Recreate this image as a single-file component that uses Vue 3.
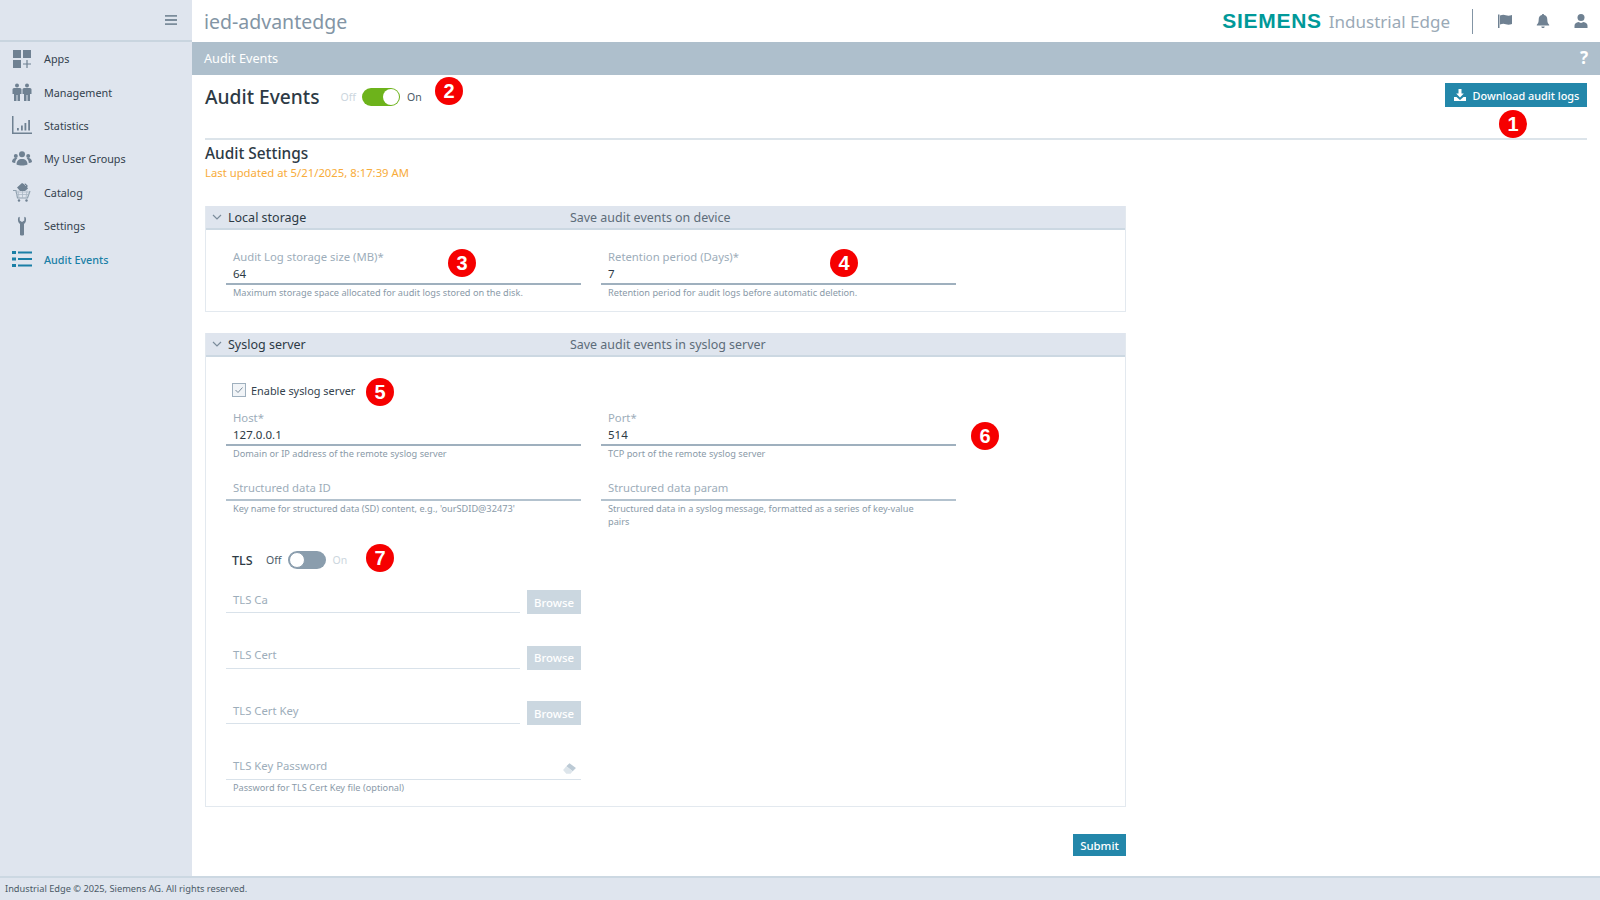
<template>
  <div class="page">
    <div class="body-row">
      <aside class="sidebar">
        <div class="side-head">
          <svg class="burger" viewBox="0 0 12 12" width="12" height="12"><path d="M0 1h12v1.800H0zM0 5.100h12v1.800H0zM0 9.200h12V11H0z" fill="#7b8c9b" /></svg>
        </div>
        <nav>
          <a v-for="item in navItems" :key="item.label" class="nav-item" :class="{ active: item.active }">
            <svg class="nav-icon" viewBox="0 0 20 20" width="20" height="20" v-html="item.icon"></svg>
            <span>{{ item.label }}</span>
          </a>
        </nav>
      </aside>

      <main class="main">
        <header class="topbar">
          <div class="app-name">ied-advantedge</div>
          <div class="brand">
            <span class="siemens">SIEMENS</span>
            <span class="edge">Industrial Edge</span>
          </div>
          <div class="top-sep"></div>
          <svg class="top-icon" viewBox="0 0 16 16" width="16" height="16"><path d="M1 1.500h1.500v13.500H1zM3 2.500c2.500-1 4-1 5.800-.3 1.700.6 3.700.6 6.200-.2v9c-2.500.8-4.500.8-6.200.2-1.800-.7-3.300-.7-5.800.3z" fill="#6f8192" /></svg>
          <svg class="top-icon" viewBox="0 0 16 16" width="16" height="16"><path d="M8 1c.7 0 1.100.5 1.100 1.100C11.200 2.600 12.300 4.300 12.300 6.500c0 2.700.6 4 1.900 5.300v.7H1.800v-.7C3.100 10.500 3.700 9.200 3.700 6.500c0-2.200 1.100-3.900 3.200-4.400C6.900 1.500 7.300 1 8 1zM6.300 13.500h3.400C9.600 14.500 8.900 15 8 15s-1.600-.5-1.700-1.500z" fill="#6f8192" /></svg>
          <svg class="top-icon last" viewBox="0 0 16 16" width="16" height="16"><circle cx="8" cy="4.600" r="3.500" fill="#6f8192" /><path d="M1.500 15v-2.200c0-2 1.800-3.300 4-3.700.8.500 1.600.8 2.500.8s1.700-.3 2.500-.8c2.200.4 4 1.700 4 3.700V15z" fill="#6f8192" /></svg>
        </header>

        <div class="crumb-bar">
          <span>Audit Events</span>
          <span class="help">?</span>
        </div>

        <div class="content">
          <div class="title-row">
            <h1>Audit Events</h1>
            <div class="switch-wrap">
              <span class="sw-label dim">Off</span>
              <span class="switch on"><i></i></span>
              <span class="sw-label">On</span>
            </div>
            <button class="btn download">
              <svg viewBox="0 0 14 14" width="14" height="14"><path d="M5.500 1h3v4.500h2.300L7 9.500 3.200 5.500h2.300zM1 9h2.500L7 12l3.500-3H13v4H1z" fill="#fff" /></svg>
              Download audit logs
            </button>
          </div>

          <div class="settings-head">
            <h2>Audit Settings</h2>
            <div class="updated">Last updated at 5/21/2025, 8:17:39 AM</div>
          </div>

          <section class="panel">
            <div class="panel-head">
              <svg class="chev" viewBox="0 0 10 6" width="10" height="6"><path d="M1 1l4 4 4-4" fill="none" stroke="#7b8c9b" stroke-width="1.200" /></svg>
              <span class="panel-title">Local storage</span>
              <span class="panel-desc">Save audit events on device</span>
            </div>
            <div class="panel-body local">
              <div class="grid">
                <div class="field" v-for="f in localFields" :key="f.label">
                  <div class="box filled">
                    <div class="label">{{ f.label }}</div>
                    <div class="value">{{ f.value }}</div>
                  </div>
                  <div class="hint">{{ f.hint }}</div>
                </div>
              </div>
            </div>
          </section>

          <section class="panel syslog">
            <div class="panel-head">
              <svg class="chev" viewBox="0 0 10 6" width="10" height="6"><path d="M1 1l4 4 4-4" fill="none" stroke="#7b8c9b" stroke-width="1.200" /></svg>
              <span class="panel-title">Syslog server</span>
              <span class="panel-desc">Save audit events in syslog server</span>
            </div>
            <div class="panel-body sys">
              <label class="check">
                <span class="check-box">
                  <svg viewBox="0 0 12 12" width="12" height="12"><path d="M2.500 6l2.500 2.500 4.500-5" fill="none" stroke="#7b8c9b" stroke-width="1" /></svg>
                </span>
                Enable syslog server
              </label>

              <div class="grid">
                <div class="field" v-for="f in hostFields" :key="f.label">
                  <div class="box filled">
                    <div class="label">{{ f.label }}</div>
                    <div class="value">{{ f.value }}</div>
                  </div>
                  <div class="hint">{{ f.hint }}</div>
                </div>
              </div>

              <div class="grid structured">
                <div class="field" v-for="f in structuredFields" :key="f.label">
                  <div class="box empty dark">
                    <div class="label">{{ f.label }}</div>
                  </div>
                  <div class="hint">{{ f.hint }}</div>
                </div>
              </div>

              <div class="tls-row">
                <span class="tls-title">TLS</span>
                <span class="sw-label">Off</span>
                <span class="switch off"><i></i></span>
                <span class="sw-label dim">On</span>
              </div>

              <div class="tls-list">
                <div class="tls-item" v-for="name in tlsFiles" :key="name">
                  <div class="box empty light">
                    <div class="label">{{ name }}</div>
                  </div>
                  <button class="browse">Browse</button>
                </div>
                <div class="field tls-pass">
                  <div class="box empty light">
                    <div class="label">TLS Key Password</div>
                    <svg class="eraser" viewBox="0 0 14 12" width="15" height="13"><path d="M7 1l6 4.500-3 3L4 4z" fill="#bccad5" /><path d="M4 4l6 4.500L8 11H4L1 7.500z" fill="#dde5eb" /></svg>
                  </div>
                  <div class="hint">Password for TLS Cert Key file (optional)</div>
                </div>
              </div>
            </div>
          </section>

          <div class="submit-row">
            <button class="btn submit">Submit</button>
          </div>
        </div>
      </main>
    </div>

    <footer class="footer">Industrial Edge © 2025, Siemens AG. All rights reserved.</footer>

    <span v-for="b in badges" :key="b.n" class="badge" :style="{ left: b.x + 'px', top: b.y + 'px' }">{{ b.n }}</span>
  </div>
</template>

<script setup>
const c = '#6f8192'

const navItems = [
  {
    label: 'Apps',
    icon: `<path d="M1 1h8v8H1zM11 1h8v8h-8zM1 11h8v8H1z" fill="${c}"/><path d="M14.400 11h1.200v3.400H19v1.200h-3.400V19h-1.200v-3.400H11v-1.200h3.400z" fill="${c}"/>`
  },
  {
    label: 'Management',
    icon: `<g fill="${c}"><circle cx="5" cy="3.500" r="2"/><circle cx="15" cy="3.500" r="2"/><path d="M.5 7.500C.5 6.500 1.500 6 2.500 6h5c1 0 2 .5 2 1.500V12H8v7H5.500v-6h-1v6H2v-7H.5zM10.500 7.500c0-1 1-1.500 2-1.500h5c1 0 2 .5 2 1.500V12H18v7h-2.500v-6h-1v6H12v-7h-1.500z"/></g>`
  },
  {
    label: 'Statistics',
    icon: `<g fill="${c}"><path d="M0 1h1.500v16.500H20V19H0z"/><path d="M5 13h1.800v2.500H5zM9 10.500h1.800v5H9zM12.500 8h1.800v7.500h-1.800zM16.200 5h1.800v10.500h-1.800z"/></g>`
  },
  {
    label: 'My User Groups',
    icon: `<g fill="${c}"><circle cx="10" cy="5.200" r="3"/><circle cx="3.800" cy="7" r="2"/><circle cx="16.200" cy="7" r="2"/><path d="M4.500 15.500c0-3.500 2-5.500 5.500-5.500s5.500 2 5.500 5.500c-3 1.300-8 1.300-11 0z"/><path d="M0 13c0-2.200 1.300-4 3.800-4 .6 0 1 .1 1.500.3-1.300 1.100-2 2.700-2.100 4.800C2 14 .9 13.700 0 13zM20 13c0-2.200-1.300-4-3.800-4-.6 0-1 .1-1.500.3 1.300 1.100 2 2.700 2.100 4.800 1.200-.1 2.300-.4 3.200-1.100z"/></g>`
  },
  {
    label: 'Catalog',
    icon: `<path d="M5 5.500L10 1l2 1 1.500-.5L16 4l-1 1 1 1.500-3 2.500H8z" fill="${c}"/><path d="M7 2.500l-2 2M11.500 1.500L14 4" stroke="#dfe5ee" stroke-width=".6" fill="none"/><path d="M1 8.500h3l1.500 7.500h10L18 9" fill="none" stroke="#8fa0ae" stroke-width="1.200"/><path d="M3.500 10h14M4.200 12.500h12.500M6 8.500L7 16M10.500 9v7M15 8.500L14 16" stroke="#a9b8c4" stroke-width=".8" fill="none"/><circle cx="7" cy="18.500" r="1.200" fill="${c}"/><circle cx="14.500" cy="18.500" r="1.200" fill="${c}"/>`
  },
  {
    label: 'Settings',
    icon: `<path d="M6.200 1.500c-.6 2.800-.2 5 1.800 6.500v10.500c0 .8.500 1 2 1s2-.2 2-1V8c2-1.500 2.400-3.700 1.800-6.500l-1.500-.7v3.700L10 6 7.700 4.500V.8z" fill="${c}"/>`
  },
  {
    label: 'Audit Events',
    active: true,
    icon: `<g fill="#1a7fa6"><path d="M0 2h4v3H0zM0 8.500h4v3H0zM0 15h4v3H0z"/><path d="M6 2.400h14v2.200H6zM6 8.900h14v2.200H6zM6 15.400h14v2.200H6z"/></g>`
  }
]

const localFields = [
  {
    label: 'Audit Log storage size (MB)*',
    value: '64',
    hint: 'Maximum storage space allocated for audit logs stored on the disk.'
  },
  {
    label: 'Retention period (Days)*',
    value: '7',
    hint: 'Retention period for audit logs before automatic deletion.'
  }
]

const hostFields = [
  { label: 'Host*', value: '127.0.0.1', hint: 'Domain or IP address of the remote syslog server' },
  { label: 'Port*', value: '514', hint: 'TCP port of the remote syslog server' }
]

const structuredFields = [
  {
    label: 'Structured data ID',
    hint: `Key name for structured data (SD) content, e.g., 'ourSDID@32473'`
  },
  {
    label: 'Structured data param',
    hint: 'Structured data in a syslog message, formatted as a series of key-value pairs'
  }
]

const tlsFiles = ['TLS Ca', 'TLS Cert', 'TLS Cert Key']

// annotation markers, free positions on top of the screenshot
const badges = [
  { n: 1, x: 1513, y: 124 },
  { n: 2, x: 449, y: 91 },
  { n: 3, x: 462, y: 263 },
  { n: 4, x: 844, y: 263 },
  { n: 5, x: 380, y: 392 },
  { n: 6, x: 985, y: 436 },
  { n: 7, x: 380, y: 558 }
]
</script>

<style>
html, body {
  margin: 0;
  background: #fff;
}
</style>

<style scoped>
.page {
  position: relative;
  display: flex;
  flex-direction: column;
  width: 1600px;
  height: 900px;
  overflow: hidden;
  font-family: "Noto Sans", "Open Sans", sans-serif;
  font-size: 11px;
  color: #2d3a45;
  background: #fff;
}

.body-row {
  display: flex;
  flex: 1;
  min-height: 0;
}

.sidebar {
  width: 192px;
  flex-shrink: 0;
  background: #dfe5ee;
}

.side-head {
  display: flex;
  align-items: center;
  justify-content: flex-end;
  height: 40px;
  padding-right: 15px;
  border-bottom: 2px solid #c9d5df;
}

.nav-item {
  display: flex;
  align-items: center;
  gap: 12px;
  height: 33.4px;
  padding-left: 12px;
  font-size: 10.8px;
  color: #33414d;
}

.nav-item.active {
  color: #1a7fa6;
  font-weight: 500;
}

.main {
  flex: 1;
  min-width: 0;
  display: flex;
  flex-direction: column;
}

.topbar {
  display: flex;
  align-items: center;
  height: 42px;
  padding-left: 12px;
}

.app-name {
  flex: 1;
  font-size: 19.500px;
  color: #8395a5;
}

.brand {
  display: flex;
  align-items: center;
  gap: 7px;
}

.siemens {
  font-family: "Liberation Sans", sans-serif;
  font-size: 21px;
  font-weight: 700;
  letter-spacing: .7px;
  color: #009999;
}

.edge {
  font-size: 17px;
  color: #9aa9b6;
}

.top-sep {
  width: 1px;
  height: 25px;
  margin: 0 24px 0 22px;
  background: #8395a5;
}

.top-icon {
  margin-right: 22px;
}

.top-icon.last {
  margin-right: 11px;
}

.crumb-bar {
  display: flex;
  align-items: center;
  justify-content: space-between;
  height: 31px;
  padding: 0 12px 2px;
  font-size: 12.700px;
  color: #fff;
  background: #aebfcc;
}

.help {
  font-size: 17px;
  font-weight: 700;
}

.content {
  flex: 1;
  padding: 8px 13px 0;
}

.title-row {
  display: flex;
  align-items: flex-start;
  height: 55px;
  border-bottom: 2px solid #dce4ea;
}

h1 {
  margin: 0 21px 0 0;
  font-size: 19.200px;
  font-weight: 500;
  line-height: 28px;
  color: #2d3a45;
}

.switch-wrap {
  display: flex;
  align-items: center;
  height: 28px;
  gap: 6.500px;
}

.sw-label {
  font-size: 10.500px;
  color: #4b5a67;
}

.sw-label.dim {
  color: #ccd6de;
}

.switch {
  position: relative;
  display: inline-block;
  width: 38px;
  height: 18px;
  box-sizing: border-box;
  border-radius: 9px;
}

.switch i {
  position: absolute;
  top: 1px;
  width: 16px;
  height: 16px;
  box-sizing: border-box;
  border-radius: 50%;
  background: #fff;
}

.switch.on {
  background: #6db31b;
}

.switch.on i {
  right: 1px;
}

.switch.off {
  background: #8a9dad;
}

.switch.off i {
  left: 1px;
  border: 1px solid #8a9dad;
}

.btn {
  border: 0;
  padding: 0;
  font-family: inherit;
  font-weight: 500;
  color: #fff;
  background: #2387aa;
}

.download {
  display: flex;
  align-items: center;
  justify-content: center;
  gap: 6px;
  width: 142px;
  height: 24px;
  margin-left: auto;
  font-size: 10.900px;
}

.settings-head {
  padding-top: 3px;
}

h2 {
  margin: 0;
  font-size: 15.400px;
  font-weight: 500;
  line-height: 22px;
  color: #2d3a45;
}

.updated {
  font-size: 11.300px;
  line-height: 16px;
  color: #f8ac3a;
}

.panel {
  width: 921px;
  margin-top: 25px;
  box-sizing: border-box;
  border: 1px solid #e3e9ef;
  border-top: 0;
}

.panel.syslog {
  margin-top: 21px;
}

.panel-head {
  display: flex;
  align-items: center;
  height: 22px;
  border-bottom: 2px solid #ccd8e2;
  background: #dfe5ee;
}

.chev {
  margin-left: 6px;
}

.panel-title {
  width: 342px;
  margin-left: 6px;
  font-size: 12.500px;
  color: #2d3a45;
}

.panel-desc {
  font-size: 12.450px;
  color: #5d6c79;
}

.panel-body {
  padding: 0 20px 12px;
}

.panel-body.local {
  padding-top: 19px;
}

.panel-body.sys {
  padding-top: 25px;
}

.grid {
  display: grid;
  grid-template-columns: 355px 355px;
  gap: 20px;
}

.grid.structured {
  margin-top: 20px;
}

.box {
  position: relative;
  box-sizing: border-box;
  padding: 0 7px;
}

.box.filled {
  height: 36px;
  border-bottom: 2px solid #9fb0be;
}

.box.empty {
  height: 21px;
}

.box.dark {
  border-bottom: 2px solid #b3c2ce;
}

.box.light {
  height: 23px;
  padding-top: 1.500px;
  border-bottom: 1px solid #d9e2ea;
}

.label {
  font-size: 11.300px;
  line-height: 16px;
  color: #9dadba;
}

.value {
  margin-top: 1px;
  font-size: 11.500px;
  line-height: 16px;
  color: #2d3a45;
}

.hint {
  padding: 1px 40px 0 7px;
  font-size: 9.200px;
  line-height: 13px;
  color: #8a9aa8;
}

.check {
  display: flex;
  align-items: center;
  gap: 5px;
  height: 16px;
  margin-bottom: 12px;
  font-size: 10.900px;
  color: #33414d;
}

.check-box {
  display: flex;
  width: 12px;
  height: 12px;
  margin-left: 6px;
  border: 1px solid #9fb0be;
  background: #f1f4f7;
}

.tls-row {
  display: flex;
  align-items: center;
  height: 20px;
  margin-top: 22px;
  padding-left: 6px;
  gap: 6.500px;
}

.tls-title {
  margin-right: 7px;
  font-size: 12.500px;
  font-weight: 500;
  color: #2d3a45;
}

.tls-list {
  display: flex;
  flex-direction: column;
  gap: 31.500px;
  margin-top: 20px;
  width: 355px;
}

.tls-item {
  display: flex;
  align-items: flex-start;
  gap: 7px;
}

.tls-item .box {
  flex: 1;
}

.browse {
  width: 54px;
  height: 24px;
  padding: 0;
  border: 0;
  font-family: inherit;
  font-size: 11.400px;
  font-weight: 500;
  color: #fff;
  background: #cbd7e0;
}

.eraser {
  position: absolute;
  right: 4px;
  top: 5px;
}

.submit-row {
  display: flex;
  justify-content: flex-end;
  width: 921px;
  margin-top: 27.500px;
}

.submit {
  width: 53px;
  height: 22px;
  font-size: 11.400px;
}

.footer {
  height: 22px;
  padding-left: 5px;
  border-top: 2px solid #ccd8e2;
  font-size: 9.250px;
  line-height: 22px;
  color: #4b5a67;
  background: #dfe5ee;
}

.badge {
  position: absolute;
  width: 28px;
  height: 28px;
  margin: -14px 0 0 -14px;
  border-radius: 50%;
  font-family: "Liberation Sans", sans-serif;
  font-size: 20px;
  font-weight: 700;
  line-height: 28px;
  text-align: center;
  color: #fff;
  background: #f60000;
}
</style>
